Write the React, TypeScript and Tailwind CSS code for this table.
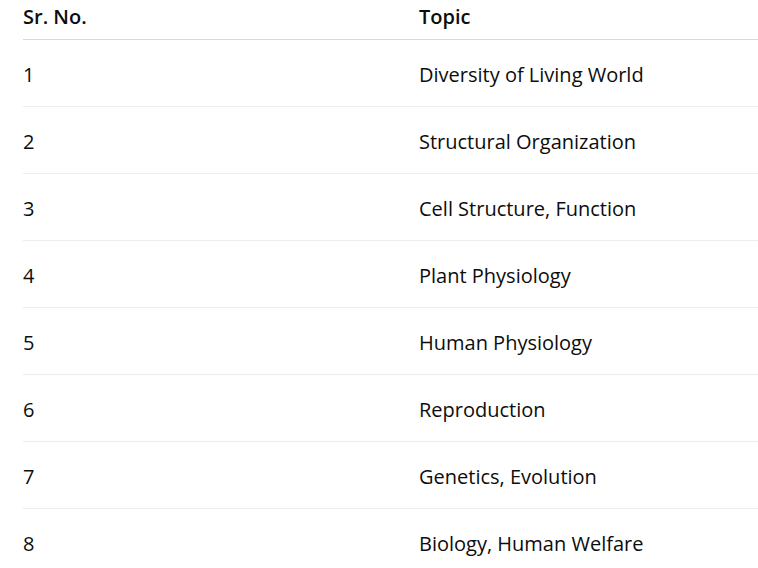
import React from 'react';

const topics = [
  'Diversity of Living World',
  'Structural Organization',
  'Cell Structure, Function',
  'Plant Physiology',
  'Human Physiology',
  'Reproduction',
  'Genetics, Evolution',
  'Biology, Human Welfare',
];

export default function App() {
  return (
    <div className="min-h-screen bg-white pl-[23px] overflow-hidden" style={{ fontFamily: '"Open Sans", sans-serif' }}>
      <table className="w-[760px] border-collapse text-[20px] leading-[28px] text-[#0d0d0d]">
        <thead>
          <tr className="border-b border-[#d9d9d9]">
            <th className="w-[396px] pt-[3px] pb-[8px] text-left font-semibold">Sr. No.</th>
            <th className="pt-[3px] pb-[8px] text-left font-semibold">Topic</th>
          </tr>
        </thead>
        <tbody>
          {topics.map((t, i) => (
            <tr key={t} className="border-b border-[#ececec]">
              <td className="pt-[21px] pb-[17px]">{i + 1}</td>
              <td className="pt-[21px] pb-[17px]">{t}</td>
            </tr>
          ))}
        </tbody>
      </table>
    </div>
  );
}
